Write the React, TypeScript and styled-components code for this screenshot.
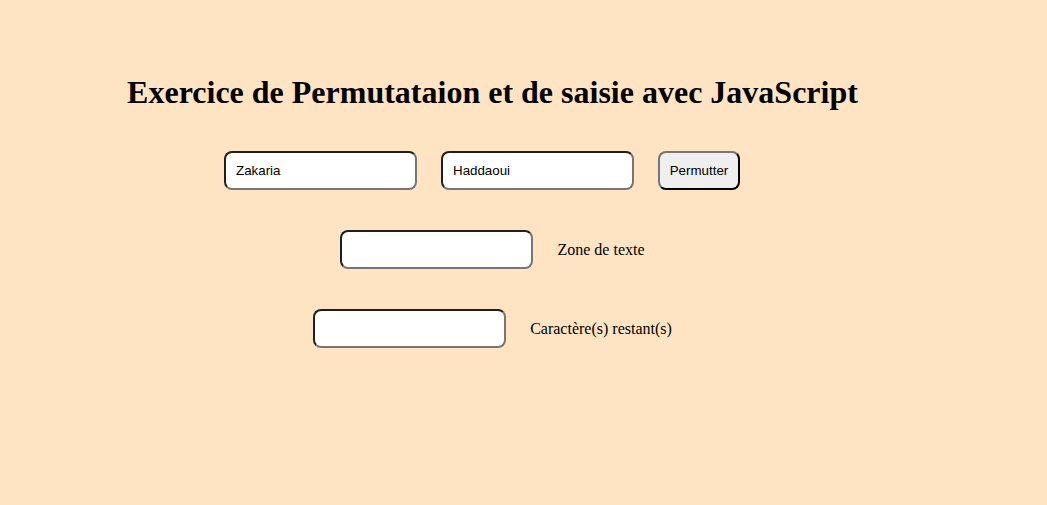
import React from "react";
import styled, { createGlobalStyle } from "styled-components";

const Global = createGlobalStyle`
  html, body { margin: 0; padding: 0; }
  body {
    background: #ffe4c4;
    font-family: "Liberation Serif", "Times New Roman", serif;
    color: #000;
  }
`;

const Page = styled.div`
  width: 969px;
  margin: 0 8px;
  padding-top: 74px;
  display: flex;
  flex-direction: column;
  align-items: center;
`;

const Title = styled.h1`
  margin: 0 0 40px 0;
  font-size: 32px;
  font-weight: bold;
  line-height: 37px;
`;

const Row = styled.div<{ $offset?: number }>`
  display: flex;
  align-items: center;
  gap: 24px;
  margin-right: ${(p) => p.$offset ?? 0}px;
  margin-bottom: 40px;
`;

const Field = styled.input`
  box-sizing: border-box;
  width: 193px;
  height: 39px;
  padding: 0 10px;
  border-width: 2px;
  border-style: solid;
  border-color: #1f1f1f #767676 #767676 #1f1f1f;
  border-radius: 8px;
  background: #fff;
  font-family: "Liberation Sans", Arial, sans-serif;
  font-size: 13.33px;
  color: #000;
  outline: none;
`;

const Button = styled.button`
  box-sizing: border-box;
  width: 82px;
  height: 39px;
  padding: 0;
  border-width: 2px;
  border-style: solid;
  border-color: #767676 #000 #000 #767676;
  border-radius: 8px;
  background: #efefef;
  font-family: "Liberation Sans", Arial, sans-serif;
  font-size: 13.33px;
  color: #000;
`;

const Label = styled.span`
  font-size: 16px;
`;

export default function App() {
  return (
    <>
      <Global />
      <Page>
        <Title>Exercice de Permutataion et de saisie avec JavaScript</Title>
        <Row $offset={21}>
          <Field defaultValue="Zakaria" />
          <Field defaultValue="Haddaoui" />
          <Button>Permutter</Button>
        </Row>
        <Row>
          <Field />
          <Label>Zone de texte</Label>
        </Row>
        <Row>
          <Field />
          <Label>Caractère(s) restant(s)</Label>
        </Row>
      </Page>
    </>
  );
}
